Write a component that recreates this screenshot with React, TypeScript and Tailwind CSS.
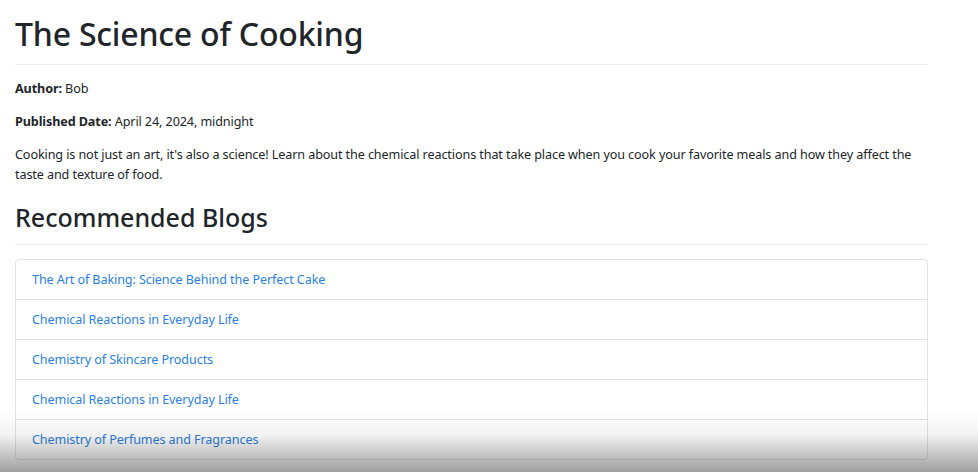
import React from "react";

const blogs = [
  "The Art of Baking: Science Behind the Perfect Cake",
  "Chemical Reactions in Everyday Life",
  "Chemistry of Skincare Products",
  "Chemical Reactions in Everyday Life",
  "Chemistry of Perfumes and Fragrances",
];

export default function App() {
  return (
    <div
      className="relative w-[978px] h-[472px] overflow-hidden bg-white text-[#212529]"
      style={{ fontFamily: '"Noto Sans", "Open Sans", sans-serif' }}
    >
      <div className="pl-[15px] pr-[50px]">
        <h1 className="mt-[13px] text-[32px] tracking-[-0.2px] leading-[41px] font-medium pb-[10px] border-b border-[#e9ecef]">
          The Science of Cooking
        </h1>
        <p className="mt-[14px] text-[12.6px] tracking-[-0.1px] leading-[20px]">
          <span className="font-bold">Author:</span> Bob
        </p>
        <p className="mt-[13px] text-[12.6px] tracking-[-0.1px] leading-[20px]">
          <span className="font-bold">Published Date:</span> April 24, 2024, midnight
        </p>
        <p className="mt-[13px] text-[12.6px] tracking-[-0.1px] leading-[20px]">
          Cooking is not just an art, it's also a science! Learn about the chemical reactions that take place when you cook your favorite meals and how they affect the taste and texture of food.
        </p>
        <h2 className="mt-[16px] text-[25px] leading-[32px] font-medium pb-[11px] border-b border-[#e9ecef]">
          Recommended Blogs
        </h2>
        <ul className="mt-[14px] border border-[#e3e3e3] rounded-[4px]">
          {blogs.map((b, i) => (
            <li
              key={i}
              className={`${i > 0 ? "h-[40px] border-t border-[#e3e3e3]" : "h-[39px]"} pl-[16px] pr-[17px] pt-[2px] flex items-center text-[12.6px] tracking-[-0.1px]`}
            >
              <a className="text-[#2d7fdc]">{b}</a>
            </li>
          ))}
        </ul>
      </div>
      <div className="absolute left-0 right-0 bottom-0 h-[62px] pointer-events-none bg-[linear-gradient(to_bottom,rgba(0,0,0,0)_0%,rgba(0,0,0,0.05)_40%,rgba(0,0,0,0.38)_100%)]" />
    </div>
  );
}
